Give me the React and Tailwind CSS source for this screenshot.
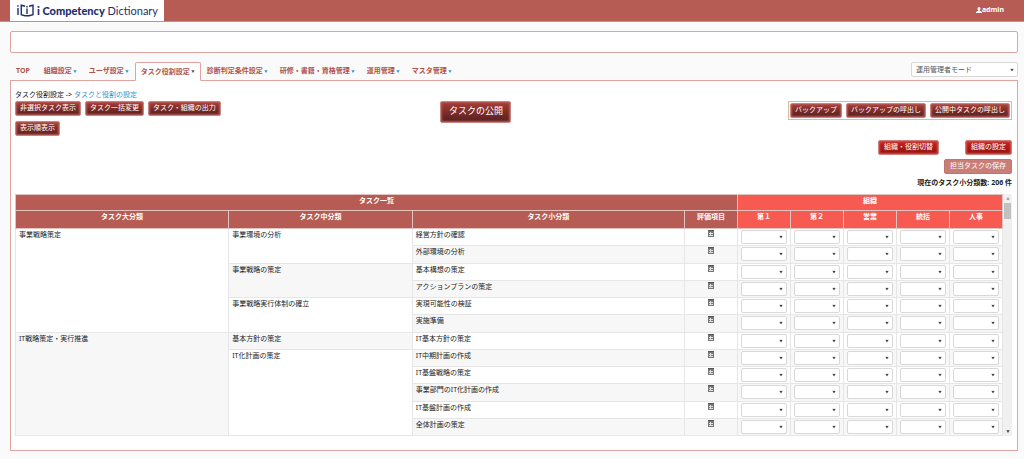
import React, { useState } from 'react';
import clsx from 'clsx';

const navItems = [
  { label: 'TOP' },
  { label: '組織設定', menu: true },
  { label: 'ユーザ設定', menu: true },
  { label: 'タスク役割設定', menu: true, active: true },
  { label: '診断判定条件設定', menu: true },
  { label: '研修・書籍・資格管理', menu: true },
  { label: '運用管理', menu: true },
  { label: 'マスタ管理', menu: true },
];

const departments = ['第１', '第２', '営業', '統括', '人事'];

const tasks = [
  {
    name: '事業戦略策定',
    groups: [
      { name: '事業環境の分析', items: ['経営方針の確認', '外部環境の分析'] },
      { name: '事業戦略の策定', items: ['基本構想の策定', 'アクションプランの策定'] },
      { name: '事業戦略実行体制の確立', items: ['実現可能性の検証', '実施準備'] },
    ],
  },
  {
    name: 'IT戦略策定・実行推進',
    groups: [
      { name: '基本方針の策定', items: ['IT基本方針の策定'] },
      {
        name: 'IT化計画の策定',
        items: [
          'IT中期計画の作成',
          'IT基盤戦略の策定',
          '事業部門のIT化計画の作成',
          'IT基盤計画の作成',
          '全体計画の策定',
        ],
      },
    ],
  },
];

// one entry per table row, with the cells that open a rowspan
function buildRows() {
  const rows = [];
  let groupNo = 0;
  tasks.forEach((task, taskNo) => {
    const total = task.groups.reduce((sum, g) => sum + g.items.length, 0);
    task.groups.forEach((group, g) => {
      group.items.forEach((item, i) => {
        rows.push({
          item,
          large: g === 0 && i === 0 ? { name: task.name, span: total, odd: taskNo % 2 === 1 } : null,
          middle: i === 0 ? { name: group.name, span: group.items.length, odd: groupNo % 2 === 1 } : null,
        });
      });
      groupNo += 1;
    });
  });
  return rows;
}

const rows = buildRows();

const buttonColors = {
  dark: 'px-1 border-[#c98480] bg-linear-to-b from-[#a83c38] to-[#551f1e] shadow-[inset_0_0_2px_1px_#b85a55]',
  red: 'px-[5px] border-[#cf7f7b] bg-linear-to-b from-[#cc2420] to-[#8f100c] shadow-[inset_0_0_2px_1px_#d8504b]',
  pale: 'px-[5px] border-[#bf7570] bg-[#cb7d78]',
};

function Button({ color = 'dark', large, disabled, children }) {
  return (
    <button
      type="button"
      disabled={disabled}
      className={clsx(
        'flex items-start justify-center rounded-xs border whitespace-nowrap text-white',
        large ? 'h-[22px] w-[71px] pt-px text-[9px] leading-4' : 'h-[15px] text-[7px] leading-[11px]',
        buttonColors[color]
      )}
    >
      {children}
    </button>
  );
}

function Caret({ className }) {
  return (
    <svg viewBox="0 0 4 3" className={clsx('h-[3px] w-1', className)} fill="currentColor" aria-hidden="true">
      <path d="M.3 .2h3.400L2 3z" />
    </svg>
  );
}

function Select({ label, className, children }) {
  return (
    <div className={clsx('relative', className)}>
      <select
        aria-label={label}
        className="block h-full w-full appearance-none rounded-xs border border-[#d8d8d8] bg-white px-1 text-[7px] leading-3 text-[#555]"
      >
        {children}
      </select>
      <Caret className="pointer-events-none absolute top-1/2 right-1 -translate-y-1/2 text-[#444]" />
    </div>
  );
}

function ListIcon() {
  return (
    <svg viewBox="0 0 6 7" className="mx-auto mt-px h-[7px] w-[6px]" shapeRendering="crispEdges" aria-hidden="true">
      <path d="M0 0h6v7H0z" fill="#777" />
      <path d="M1 2h4v4H1z" fill="#ddd" />
      <path d="M1 2h1v1H1zM1 4h1v1H1zM3 2h2v1H3zM3 4h2v1H3z" fill="#777" />
      <path d="M0 0h6v1H0z" fill="#555" />
    </svg>
  );
}

function Logo() {
  return (
    <a href="#top" className="ml-[10px] flex h-[21px] w-[154px] items-center gap-[3px] bg-white pl-[7px] text-[#1c2f6e]">
      <svg viewBox="0 0 34 26" className="h-[13px] w-[17px]" fill="none" stroke="currentColor" strokeWidth="2.8" aria-hidden="true">
        <path d="M2 8v14M2 2.500v3" />
        <path d="M16 4.500L8.500 2.500v19l7.500 2" />
        <path d="M20 9v11M20 4v3" />
        <path d="M24 4.500l8-2v19l-8 2h-8" />
      </svg>
      <span className="font-[Lato,sans-serif] text-[11px] leading-4 whitespace-nowrap">
        <b className="font-black">i Competency</b> Dictionary
      </span>
    </a>
  );
}

function Header() {
  return (
    <header className="flex h-[22px] items-start justify-between border-b border-[#c98d88] bg-[#b75c54]">
      <Logo />
      <a href="#admin" className="mt-[5px] mr-5 flex items-center text-[7px] leading-[10px] font-bold text-white">
        <svg viewBox="0 0 12 12" className="size-[6px]" fill="currentColor" aria-hidden="true">
          <path d="M6 0a3 3.300 0 0 1 3 3.300C9 5 8.300 6 7.500 6.700v1L12 9.800V12H0V9.800l4.500-2.100v-1C3.700 6 3 5 3 3.300A3 3.300 0 0 1 6 0z" />
        </svg>
        admin
      </a>
    </header>
  );
}

function Nav() {
  return (
    <div className="flex items-start justify-between">
      <nav className="flex">
        {navItems.map((item) => (
          <a
            key={item.label}
            href="#nav"
            className={clsx(
              'flex h-[18px] items-center gap-px rounded-t-xs border pl-[5px] text-[7px] leading-3 font-bold whitespace-nowrap text-[#b0534c]',
              item.menu ? 'pr-[5px]' : 'pr-[7px]',
              item.active ? '-mb-px h-[19px] border-[#dfa4a0] border-b-white bg-white' : 'border-transparent'
            )}
          >
            {item.label}
            {item.menu && <Caret className={clsx('h-[2px]', item.active ? 'text-[#555]' : 'text-[#2f96d0]')} />}
          </a>
        ))}
      </nav>
      <Select label="モード" className="h-[15px] w-[107px]">
        <option>運用管理者モード</option>
      </Select>
    </div>
  );
}

function Toolbar() {
  return (
    <div className="grid grid-cols-12">
      <div className="col-span-5 flex flex-col items-start gap-[5px]">
        <div className="flex gap-1">
          <Button>非選択タスク表示</Button>
          <Button>タスク一括変更</Button>
          <Button>タスク・組織の出力</Button>
        </div>
        <Button>表示順表示</Button>
      </div>
      <div className="col-span-2 pl-[10px]">
        <Button large>タスクの公開</Button>
      </div>
      <div className="col-span-5 flex items-start justify-end">
        <div className="flex gap-1 border border-[#d3bf9c] p-px">
          <Button>バックアップ</Button>
          <Button>バックアップの呼出し</Button>
          <Button>公開中タスクの呼出し</Button>
        </div>
      </div>
    </div>
  );
}

function TaskTable() {
  const th = 'border border-[#e3c3c0] align-top text-[7px] leading-3 font-bold text-white';
  const td = 'border border-[#e6e6e6] px-[3px] align-top text-[7px] leading-[11px]';

  return (
    <table className="h-full w-full table-fixed border-collapse">
      <colgroup>
        <col className="w-[21.6%]" />
        <col className="w-[18.6%]" />
        <col />
        <col className="w-[53px]" />
        {departments.map((d) => (
          <col key={d} className="w-[53px]" />
        ))}
      </colgroup>
      <thead>
        <tr className="h-4">
          <th colSpan={4} className={clsx(th, 'bg-[#b75c54]')}>タスク一覧</th>
          <th colSpan={5} className={clsx(th, 'bg-[#f75a50]')}>組織</th>
        </tr>
        <tr className="h-[18px]">
          {['タスク大分類', 'タスク中分類', 'タスク小分類', '評価項目'].map((h) => (
            <th key={h} className={clsx(th, 'bg-[#b75c54]')}>{h}</th>
          ))}
          {departments.map((d) => (
            <th key={d} className={clsx(th, 'bg-[#f75a50]')}>{d}</th>
          ))}
        </tr>
      </thead>
      <tbody>
        {rows.map((row, i) => (
          <tr key={row.item} className={i % 2 ? 'bg-[#f7f7f7]' : 'bg-white'}>
            {row.large && (
              <td rowSpan={row.large.span} className={clsx(td, row.large.odd ? 'bg-[#f7f7f7]' : 'bg-white')}>
                {row.large.name}
              </td>
            )}
            {row.middle && (
              <td rowSpan={row.middle.span} className={clsx(td, row.middle.odd ? 'bg-[#f7f7f7]' : 'bg-white')}>
                {row.middle.name}
              </td>
            )}
            <td className={td}>{row.item}</td>
            <td className={td}>
              <a href="#detail" aria-label="評価項目">
                <ListIcon />
              </a>
            </td>
            {departments.map((d) => (
              <td key={d} className="border border-[#e6e6e6] px-[3px] pt-px align-top">
                <Select label={row.item + ' ' + d} className="h-[14px]">
                  <option></option>
                </Select>
              </td>
            ))}
          </tr>
        ))}
      </tbody>
    </table>
  );
}

function ScrollBar() {
  return (
    <div className="flex w-[9px] shrink-0 flex-col items-center bg-[#f0f0f0] py-[3px]">
      <Caret className="rotate-180 text-[#999]" />
      <div className="mt-[3px] h-4 w-[7px] bg-[#c1c1c1]" />
      <Caret className="mt-auto text-[#444]" />
    </div>
  );
}

export default function App() {
  const [count] = useState(206);

  return (
    <div className="min-h-screen bg-[#fafafa] pb-2 font-['Noto_Sans','Noto_Sans_CJK_JP',sans-serif] text-[7px] text-[#222]">
      <Header />
      <div className="mr-[6px] ml-[10px]">
        <div className="mt-[9px] mb-[9px] h-[22px] rounded-xs border border-[#dfa4a0] bg-white" />
        <Nav />
        <main className="border border-[#dfa4a0] bg-white pt-2 pr-[5px] pb-[14px] pl-1">
          <div className="leading-3">
            タスク役割設定 -&gt; <a href="#roles" className="text-[#2f96d0]">タスクと役割の設定</a>
          </div>
          <Toolbar />
          <div className="mt-1 flex justify-end gap-[26px]">
            <Button color="red">組織・役割切替</Button>
            <Button color="red">組織の設定</Button>
          </div>
          <div className="mt-1 flex justify-end">
            <Button color="pale" disabled>担当タスクの保存</Button>
          </div>
          <p className="mt-[3px] mb-[5px] text-right leading-3 font-bold">現在のタスク小分類数: {count} 件</p>
          <div className="flex h-[242px]">
            <div className="min-w-0 grow">
              <TaskTable />
            </div>
            <ScrollBar />
          </div>
        </main>
      </div>
    </div>
  );
}
